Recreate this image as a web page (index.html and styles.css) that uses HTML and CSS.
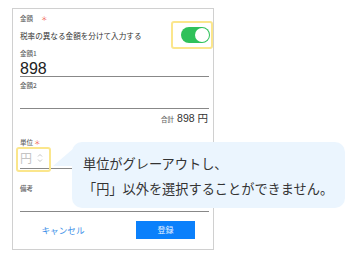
FILE: index.html
```html
<!DOCTYPE html>
<html>
	<head>
		<meta charset="UTF-8">
		<title>金額入力</title>
		<link rel="stylesheet" href="styles.css">
	</head>
	<body>
		<div class="card">
			<div class="label top">金額<span class="req">＊</span></div>
			<div class="row">
				<span class="rowText">税率の異なる金額を分けて入力する</span>
				<span class="mark toggleMark">
					<span class="toggle"><span class="knob"></span></span>
				</span>
			</div>
			<div class="label sub">金額1</div>
			<div class="field amount">898</div>
			<div class="label sub2">金額2</div>
			<div class="field empty"></div>
			<div class="total"><span class="totalLabel">合計</span>898 円</div>
			<div class="label unitLabel">単位<span class="req near">＊</span></div>
			<div class="field unit">
				<span class="unitText">円</span>
				<svg class="chev" width="6" height="12" viewBox="0 0 6 12">
					<path d="M1 4.5 L3 2.5 L5 4.5 M1 7.5 L3 9.5 L5 7.5" fill="none" stroke="#b5b5b5" stroke-width="0.8"/>
				</svg>
				<span class="mark unitMark"></span>
			</div>
			<div class="label memoLabel">備考</div>
			<div class="field memo"></div>
			<div class="buttons">
				<span class="cancel">キャンセル</span>
				<span class="submit">登録</span>
			</div>
		</div>
		<div class="bubble">
			<svg class="tail" width="24" height="24" viewBox="0 0 24 24">
				<polygon points="22,2 1,20 24,20" fill="#ebf5fe"/>
			</svg>
			<p>単位がグレーアウトし、</p>
			<p>「円」以外を選択することができません。</p>
		</div>
	</body>
</html>
```

FILE: styles.css
```css
body{
	margin: 0;
	padding: 0;
	background: #fff;
	font-family: "Noto Sans CJK JP", "Noto Sans", sans-serif;
	color: #333;
}
.card{
	position: relative;
	box-sizing: border-box;
	margin: 8px 0 0 12px;
	width: 202px;
	height: 242px;
	border: 1px solid #d0d0d0;
	padding: 0 4px 0 7px;
}
.label{
	font-size: 6.5px;
	color: #666;
	font-weight: 500;
}
.req{
	color: #f26b5b;
	margin-left: 8px;
	font-weight: normal;
}
.req.near{
	margin-left: 1px;
}
.top{
	height: 12px;
	line-height: 18px;
}
.row{
	display: flex;
	align-items: center;
	justify-content: space-between;
	height: 28px;
	margin-right: -4px;
}
.rowText{
	font-size: 7.6px;
	color: #333;
}
.mark{
	box-sizing: border-box;
	border: 2px solid #fbe68c;
	border-radius: 3px;
}
.toggleMark{
	display: flex;
	align-items: center;
	justify-content: flex-end;
	width: 42px;
	height: 28px;
	padding-right: 1px;
}
.toggle{
	position: relative;
	width: 29px;
	height: 16px;
	border-radius: 8px;
	background: #2fc15a;
}
.knob{
	position: absolute;
	right: 1px;
	top: 1px;
	width: 14px;
	height: 14px;
	border-radius: 50%;
	background: #fff;
}
.sub{
	height: 8px;
	line-height: 8px;
}
.field{
	border-bottom: 1px solid #888;
}
.amount{
	height: 15px;
	padding-top: 4px;
	line-height: 15px;
	font-family: "Liberation Sans", Arial, sans-serif;
	font-size: 16px;
	color: #222;
}
.sub2{
	height: 15px;
	line-height: 16px;
}
.empty{
	height: 16px;
}
.total{
	height: 19px;
	line-height: 19px;
	text-align: right;
	padding-right: 1px;
	font-family: "Liberation Sans", "Noto Sans CJK JP", sans-serif;
	font-size: 10.5px;
	color: #333;
}
.totalLabel{
	font-family: "Noto Sans CJK JP", sans-serif;
	font-size: 6.5px;
	font-weight: 500;
	color: #666;
	margin-right: 3px;
}
.unitLabel{
	margin-top: 10px;
	height: 9px;
	line-height: 9px;
}
.unit{
	position: relative;
	display: flex;
	align-items: center;
	height: 21px;
}
.unitText{
	font-size: 12px;
	color: #c4c4c4;
}
.chev{
	margin-left: 5px;
}
.unitMark{
	position: absolute;
	left: -4px;
	top: 0;
	width: 35px;
	height: 25px;
}
.memoLabel{
	margin-top: 14px;
	height: 10px;
	line-height: 10px;
}
.memo{
	height: 18px;
}
.buttons{
	display: flex;
	align-items: center;
	margin-top: 9px;
	height: 18px;
}
.cancel{
	width: 86px;
	text-align: center;
	font-size: 8.6px;
	color: #3d8fe8;
}
.submit{
	margin-left: 30px;
	width: 59px;
	height: 18px;
	line-height: 18px;
	text-align: center;
	background: #0b80fb;
	color: #e6f1ff;
	font-size: 8px;
}
.bubble{
	position: absolute;
	left: 72px;
	top: 142px;
	box-sizing: border-box;
	width: 273px;
	height: 66px;
	padding: 9px 0 0 11px;
	border-radius: 10px;
	background: #ebf5fe;
}
.bubble p{
	margin: 0;
	font-size: 13.2px;
	line-height: 25px;
	color: #333;
}
.tail{
	position: absolute;
	left: -20px;
	top: 4px;
}
```
